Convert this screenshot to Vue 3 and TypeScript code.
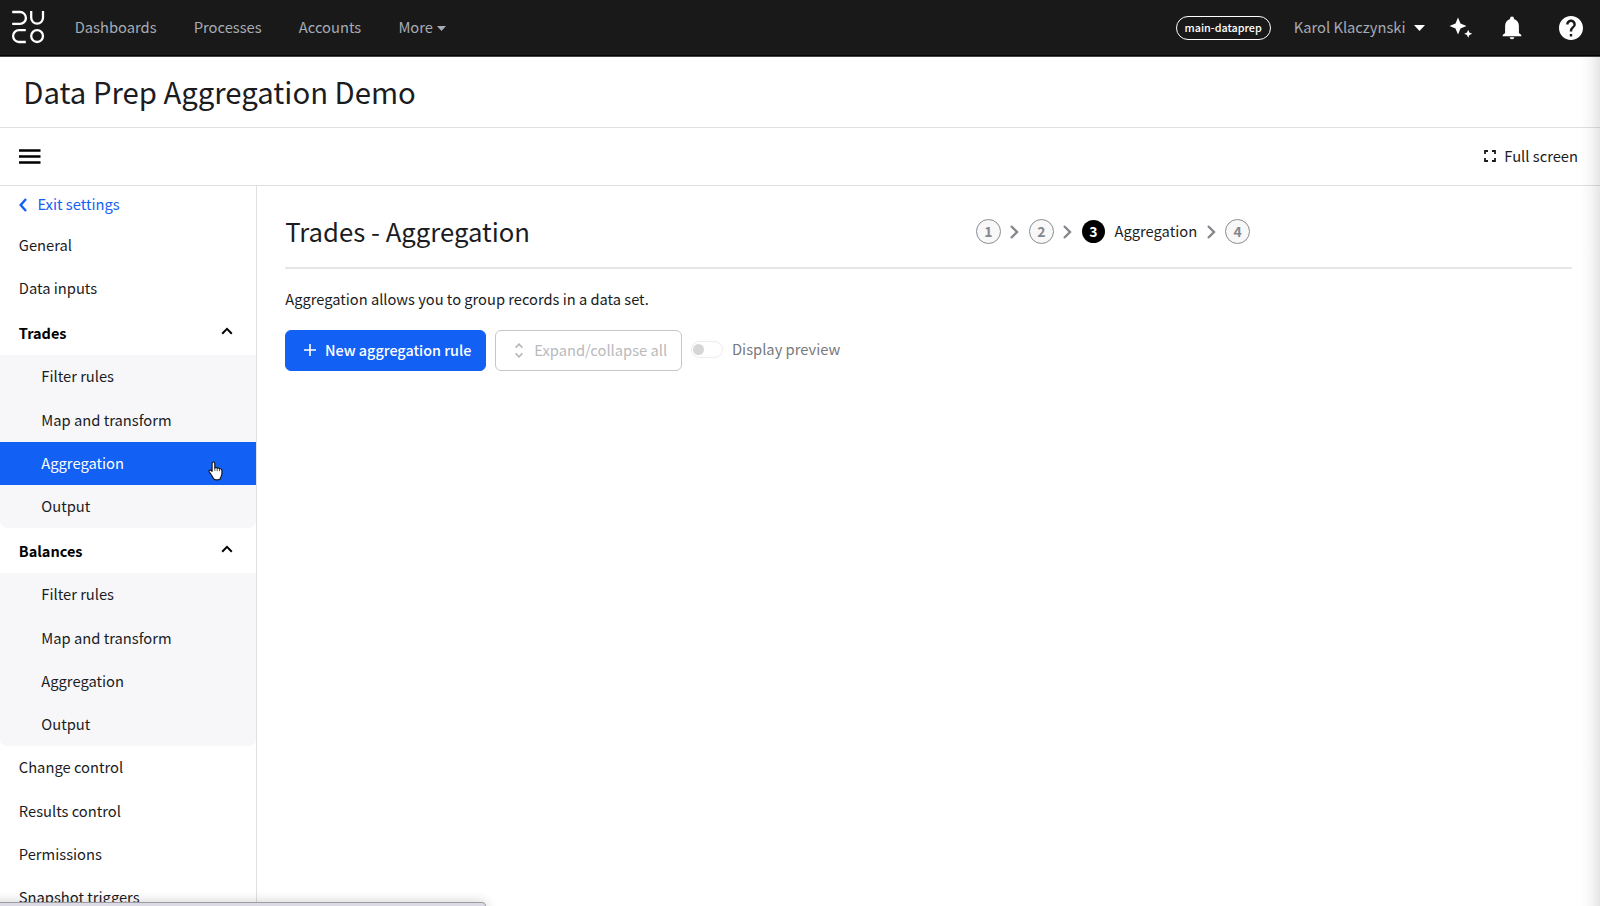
<script setup lang="ts">
interface Group {
  title: string
  items: string[]
  active?: string
}

const navLinks: string[] = ['Dashboards', 'Processes', 'Accounts']
const topLinks: string[] = ['General', 'Data inputs']
const stages: string[] = ['Filter rules', 'Map and transform', 'Aggregation', 'Output']
const groups: Group[] = [
  { title: 'Trades', items: stages, active: 'Aggregation' },
  { title: 'Balances', items: stages },
]
const bottomLinks: string[] = ['Change control', 'Results control', 'Permissions', 'Snapshot triggers']
const steps: { n: number; label?: string }[] = [{ n: 1 }, { n: 2 }, { n: 3, label: 'Aggregation' }, { n: 4 }]
</script>

<template>
  <div class="page">
    <header class="topbar">
      <svg class="logo" width="34" height="34" viewBox="0 0 34 34" fill="none" stroke="#fff" stroke-width="2.3">
        <path d="M1.2 2H9a5.9 5.9 0 0 1 0 11.8H1.2" />
        <path d="M20.2 1v6.800a5.900 5.900 0 0 0 11.800 0V1" />
        <path d="M14.800 20.200H8a5.900 5.900 0 0 0 0 11.800h6.800" />
        <circle cx="26.1" cy="26.1" r="5.900" />
      </svg>
      <nav class="nav">
        <a v-for="l in navLinks" :key="l">{{ l }}</a>
        <a class="more">More<svg width="9" height="5" viewBox="0 0 9 5"><path d="M0 0h9L4.500 5z" fill="currentColor" /></svg></a>
      </nav>
      <div class="account">
        <span class="badge">main-dataprep</span>
        <span class="user">Karol Klaczynski</span>
        <svg class="user-caret" width="11" height="6" viewBox="0 0 11 6"><path d="M0 0h11L5.500 6z" fill="#fff" /></svg>
        <svg class="sparkle" width="24" height="22" viewBox="0 0 24 22" fill="#fff">
          <path d="M9 0.500l2.500 6 6 2.500-6 2.500-2.500 6-2.500-6-6-2.500 6-2.500z" />
          <path d="M19.200 12.800l1.200 2.800 2.800 1.200-2.800 1.200-1.200 2.800-1.200-2.800-2.800-1.200 2.800-1.200z" />
        </svg>
        <svg class="bell" width="20" height="24" viewBox="0 0 20 24" fill="#fff">
          <path d="M10 .5c1.200 0 1.900.8 1.900 1.800v.6c3 .8 5 3.400 5 6.800v7.300l2.400 2v1.200H.7V19l2.400-2V9.700c0-3.400 2-6 5-6.800v-.6C8.100 1.300 8.800.5 10 .5z" />
          <path d="M7.700 21.200h4.600a2.300 2.100 0 0 1-4.600 0z" />
        </svg>
        <svg class="help" width="24" height="24" viewBox="2 2 20 20" fill="#fff">
          <path d="M12 2C6.480 2 2 6.480 2 12s4.480 10 10 10 10-4.480 10-10S17.520 2 12 2zm1 17h-2v-2h2v2zm2.070-7.750l-.9.920C13.450 12.900 13 13.500 13 15h-2v-.5c0-1.100.45-2.100 1.170-2.830l1.240-1.260c.370-.360.590-.860.590-1.410 0-1.100-.9-2-2-2s-2 .9-2 2H8c0-2.210 1.790-4 4-4s4 1.790 4 4c0 .880-.360 1.680-.930 2.250z" />
        </svg>
      </div>
    </header>

    <div class="titlebar"><h1>Data Prep Aggregation Demo</h1></div>

    <div class="toolbar">
      <svg class="burger" width="22" height="15" viewBox="0 0 22 15" stroke="#000" stroke-width="2.300">
        <path d="M0 1.500h21.500M0 7.500h21.500M0 13.500h21.500" />
      </svg>
      <span class="fullscreen">
        <svg width="12" height="12" viewBox="0 0 12 12" fill="none" stroke="#1b1c1f" stroke-width="1.800">
          <path d="M1 4V1h3M8 1h3v3M11 8v3H8M4 11H1V8" />
        </svg>
        Full screen
      </span>
    </div>

    <div class="body">
      <aside class="sidebar">
        <a class="exit">
          <svg width="8" height="14" viewBox="0 0 8 14" fill="none" stroke="#1360f5" stroke-width="2.400"><path d="M7 1L1.700 7 7 13" /></svg>
          Exit settings
        </a>
        <a v-for="l in topLinks" :key="l" class="row">{{ l }}</a>
        <section v-for="g in groups" :key="g.title">
          <div class="group-head">
            {{ g.title }}
            <svg width="12" height="8" viewBox="0 0 12 8" fill="none" stroke="#000" stroke-width="2"><path d="M1.200 6.700L6 1.900l4.800 4.800" /></svg>
          </div>
          <div class="group-items">
            <a v-for="i in g.items" :key="i" class="row sub" :class="{ active: i === g.active }">
              {{ i }}
              <svg v-if="i === g.active" class="pointer" width="16" height="20" viewBox="0 0 16 20">
                <path
                  d="M4.100 2.400c0-1.900 2.700-1.900 2.700 0v4.700c.6-.9 2.200-.7 2.400.3.700-.7 2.100-.4 2.300.6.900-.6 2.400-.1 2.400 1.300v3.100c0 2.200-.9 3-1.200 4.200-.4 1.700-1.200 2.300-3.300 2.300H8.200c-1.500 0-2.300-.6-3-1.900-.8-1.500-1.500-2.200-2.300-3.700C2.200 12 1.100 11.300 1 10.200c-.1-1.300 1.700-1.600 3.100.2z"
                  fill="#fff" stroke="#111" stroke-width="1.100" stroke-linejoin="round"
                />
                <path d="M6.800 7v3M9.200 7.600v2.600M11.500 8.200v2" stroke="#111" stroke-width=".7" />
              </svg>
            </a>
          </div>
        </section>
        <a v-for="l in bottomLinks" :key="l" class="row">{{ l }}</a>
      </aside>

      <main class="content">
        <div class="heading">
          <h2>Trades - Aggregation</h2>
          <div class="steps">
            <template v-for="(s, i) in steps" :key="s.n">
              <svg v-if="i" width="9" height="14" viewBox="0 0 9 14" fill="none" stroke="#85878c" stroke-width="2.400"><path d="M1 1l6 6-6 6" /></svg>
              <span class="step" :class="{ current: s.label }">{{ s.n }}</span>
              <span v-if="s.label" class="step-label">{{ s.label }}</span>
            </template>
          </div>
        </div>
        <p>Aggregation allows you to group records in a data set.</p>
        <div class="actions">
          <button class="btn primary">
            <svg width="12" height="12" viewBox="0 0 12 12" stroke="#fff" stroke-width="1.600"><path d="M6 0v12M0 6h12" /></svg>
            New aggregation rule
          </button>
          <button class="btn ghost">
            <svg width="8" height="15" viewBox="0 0 8 15" fill="none" stroke="#b4b6b9" stroke-width="1.600"><path d="M.6 4.600L4 1.200l3.400 3.400M.6 10.400L4 13.800l3.400-3.400" /></svg>
            Expand/collapse all
          </button>
          <label class="toggle"><span class="track"><i></i></span>Display preview</label>
        </div>
      </main>
    </div>

    <div class="edge-shade"></div>
    <div class="status-tip"></div>
  </div>
</template>

<style>
body {
  margin: 0;
  overflow: hidden;
}
</style>

<style scoped>
.page {
  position: relative;
  height: 906px;
  display: flex;
  flex-direction: column;
  overflow: hidden;
  background: #fff;
  color: #1b1c1f;
  font: 14.720px/22px "Noto Sans CJK SC", "Noto Sans", sans-serif;
}
svg {
  display: block;
  flex: none;
}
.topbar {
  flex: none;
  height: 57px;
  box-sizing: border-box;
  display: flex;
  align-items: center;
  padding: 0 17px 3px 11px;
  background: #191919;
  border-bottom: 1px solid #444;
  box-shadow: inset 0 -1px #050505;
}
.nav {
  display: flex;
  gap: 37.200px;
  margin-left: 29.700px;
  color: #a6abb5;
}
.more {
  display: flex;
  align-items: center;
  gap: 4px;
}
.more svg {
  margin-top: 4px;
}
.account {
  display: flex;
  align-items: center;
  margin-left: auto;
  color: #a6abb5;
}
.badge {
  width: 95px;
  height: 24px;
  box-sizing: border-box;
  margin-top: 2px;
  border: 1px solid #fff;
  border-radius: 12px;
  text-align: center;
  font-size: 10.800px;
  line-height: 20px;
  font-weight: 500;
  color: #fff;
}
.user {
  margin: 1px 0 0 23px;
}
.user-caret {
  margin: 3px 0 0 8px;
}
.sparkle {
  margin: 3px 0 0 24.300px;
}
.bell {
  margin: 3px 0 0 29.500px;
}
.help {
  margin: 2px 0 0 36.700px;
}
.titlebar {
  flex: none;
  height: 71px;
  box-sizing: border-box;
  border-bottom: 1px solid #e0e0e0;
  padding: 14px 0 0 23.300px;
}
h1,
h2,
p {
  margin: 0;
  font-weight: 400;
}
h1 {
  font-size: 29.300px;
  line-height: 40px;
}
.toolbar {
  flex: none;
  height: 58px;
  box-sizing: border-box;
  border-bottom: 1px solid #e0e0e0;
  display: flex;
  align-items: center;
  justify-content: space-between;
  padding: 0 22px 0 19px;
}
.fullscreen {
  display: flex;
  align-items: center;
  gap: 8px;
  padding-bottom: 1px;
}
.body {
  flex: 1;
  min-height: 0;
  display: flex;
}
.sidebar {
  flex: none;
  width: 257px;
  box-sizing: border-box;
  border-right: 1px solid #e0e0e0;
  overflow: hidden;
}
.exit {
  height: 37.600px;
  box-sizing: border-box;
  display: flex;
  align-items: center;
  gap: 10.400px;
  padding-left: 19px;
  padding-bottom: 2px;
  color: #1360f5;
}
.exit svg {
  margin-top: 2px;
}
.row {
  height: 43.270px;
  box-sizing: border-box;
  display: flex;
  align-items: center;
  padding: 0 0 1px 18.800px;
}
.group-head {
  height: 45px;
  box-sizing: border-box;
  display: flex;
  align-items: center;
  justify-content: space-between;
  padding: 0 23px 0 18.800px;
  font-size: 14.500px;
  font-weight: 700;
  color: #000;
}
.group-head svg {
  margin-bottom: 4px;
}
.group-items {
  background: #f7f7fa;
  border-radius: 0 0 7px 7px;
}
.sub {
  padding-left: 41.300px;
}
.active {
  position: relative;
  background: #1360f5;
  color: #fff;
}
.pointer {
  position: absolute;
  left: 208px;
  top: 19.500px;
}
.content {
  flex: 1;
  padding: 0 28px 0 28.300px;
}
.heading {
  height: 83px;
  box-sizing: border-box;
  border-bottom: 2px solid #e6e6e6;
  display: grid;
  grid-template-columns: 690.700px 1fr;
  align-items: center;
  padding-top: 10px;
}
h2 {
  font-size: 25.700px;
  line-height: 36px;
  padding-bottom: 2px;
}
.steps {
  display: flex;
  align-items: center;
  gap: 9.500px;
}
.step-label {
  padding: 0 0 1px;
}
.step {
  width: 25px;
  height: 25px;
  box-sizing: border-box;
  border: 1px solid #8a8c91;
  border-radius: 50%;
  background: #f8f8f8;
  color: #85878c;
  text-align: center;
  font-size: 14px;
  font-weight: 700;
  line-height: 22px;
}
.step.current {
  width: 23px;
  height: 23px;
  border: 0;
  background: #000;
  color: #fff;
}
p {
  padding-top: 19px;
  font-size: 14.670px;
}
.actions {
  display: flex;
  margin-top: 20px;
}
.btn {
  height: 41px;
  box-sizing: border-box;
  display: flex;
  align-items: center;
  border: 1px solid #1360f5;
  border-radius: 6px;
  font: inherit;
  padding: 0 0 1px;
  white-space: nowrap;
}
.primary {
  width: 200.500px;
  padding-left: 17.500px;
  gap: 9.300px;
  background: #1360f5;
  color: #fff;
  font-weight: 500;
  font-size: 14.350px;
}
.ghost {
  width: 187px;
  margin-left: 9.500px;
  padding-left: 19px;
  gap: 11px;
  border-color: #c4c6c9;
  background: #fff;
  color: #b8babd;
}
.toggle {
  display: flex;
  align-items: center;
  height: 38px;
  margin-left: 9px;
  gap: 8.700px;
  color: #77797d;
}
.track {
  width: 32px;
  height: 17px;
  box-sizing: border-box;
  border: 1px solid #ececec;
  border-radius: 9px;
  padding: 2px 1px;
  margin-top: 1px;
}
.track i {
  display: block;
  width: 11px;
  height: 11px;
  border-radius: 50%;
  background: #d6d6d6;
}
/* soft shade along the right side of the window */
.edge-shade {
  position: absolute;
  top: 57px;
  right: 0;
  bottom: 0;
  width: 20px;
  background: linear-gradient(to right, rgba(0, 0, 0, 0), rgba(0, 0, 0, 0.03) 50%, rgba(0, 0, 0, 0.1));
}
/* browser status bubble peeking in from the bottom */
.status-tip {
  position: absolute;
  left: -10px;
  bottom: -10px;
  width: 496px;
  height: 14px;
  box-sizing: border-box;
  background: #dcdae5;
  border: 1px solid #9c9ca0;
  border-radius: 4px;
  box-shadow: 0 0 12px rgba(0, 0, 0, 0.2);
}
</style>
